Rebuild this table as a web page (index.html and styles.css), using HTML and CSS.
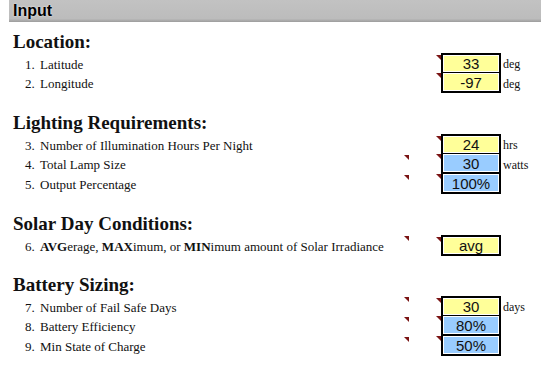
FILE: index.html
```html
<!DOCTYPE html>
<html>
<head>
<meta charset="utf-8">
<link rel="stylesheet" href="styles.css">
</head>
<body>
<div class="bar"><span class="bar-title">Input</span></div>

<section class="sec">
  <h2 class="head">Location:</h2>
  <div class="row">
    <span class="num">1.</span><span class="label">Latitude</span><span class="mk"></span>
    <span class="box first yellow"><i class="tri"></i>33</span><span class="unit">deg</span>
  </div>
  <div class="row">
    <span class="num">2.</span><span class="label">Longitude</span><span class="mk"></span>
    <span class="box last yellow"><i class="tri"></i>-97</span><span class="unit">deg</span>
  </div>
</section>

<section class="sec">
  <h2 class="head">Lighting Requirements:</h2>
  <div class="row">
    <span class="num">3.</span><span class="label">Number of Illumination Hours Per Night</span><span class="mk"></span>
    <span class="box first yellow"><i class="tri"></i>24</span><span class="unit">hrs</span>
  </div>
  <div class="row">
    <span class="num">4.</span><span class="label">Total Lamp Size</span><span class="mk"><i class="tri"></i></span>
    <span class="box blue"><i class="tri"></i>30</span><span class="unit">watts</span>
  </div>
  <div class="row">
    <span class="num">5.</span><span class="label">Output Percentage</span><span class="mk"><i class="tri"></i></span>
    <span class="box last blue"><i class="tri"></i>100%</span><span class="unit"></span>
  </div>
</section>

<section class="sec">
  <h2 class="head">Solar Day Conditions:</h2>
  <div class="row">
    <span class="num">6.</span><span class="label"><b>AVG</b>erage, <b>MAX</b>imum, or <b>MIN</b>imum amount of Solar Irradiance</span><span class="mk"><i class="tri"></i></span>
    <span class="box first last yellow"><i class="tri"></i>avg</span><span class="unit"></span>
  </div>
</section>

<section class="sec">
  <h2 class="head">Battery Sizing:</h2>
  <div class="row">
    <span class="num">7.</span><span class="label">Number of Fail Safe Days</span><span class="mk"><i class="tri"></i></span>
    <span class="box first yellow"><i class="tri"></i>30</span><span class="unit">days</span>
  </div>
  <div class="row">
    <span class="num">8.</span><span class="label">Battery Efficiency</span><span class="mk"><i class="tri"></i></span>
    <span class="box blue"><i class="tri"></i>80%</span><span class="unit"></span>
  </div>
  <div class="row">
    <span class="num">9.</span><span class="label">Min State of Charge</span><span class="mk"><i class="tri"></i></span>
    <span class="box last blue"><i class="tri"></i>50%</span><span class="unit"></span>
  </div>
</section>
</body>
</html>
```
FILE: styles.css
```css
html, body {
  margin: 0;
  padding: 0;
  background: #ffffff;
  width: 541px;
  height: 365px;
  overflow: hidden;
}
body {
  font-family: "Liberation Serif", "DejaVu Serif", serif;
  color: #111;
}
.bar {
  margin-left: 9px;
  height: 22px;
  background: linear-gradient(#c2c2c2, #bcbcbc 85%, #9c9c9c);
  display: flex;
  align-items: center;
  padding-left: 4px;
}
.bar-title {
  font-family: "Liberation Sans", Arial, sans-serif;
  font-weight: bold;
  font-size: 16px;
  color: #000;
  text-shadow: 0 0 2px #fff;
}
.sec {
  margin-top: 19px;
}
.sec:first-of-type {
  margin-top: 9px;
}
.head {
  margin: 0;
  padding-left: 13px;
  height: 22px;
  line-height: 22px;
  font-size: 19px;
  font-weight: bold;
}
.row {
  display: grid;
  grid-template-columns: 25px 15px 364px 37px 60px auto;
  height: 20px;
  align-items: stretch;
  font-size: 13px;
}
.num {
  grid-column: 2;
  align-self: center;
  padding-top: 2px;
}
.label {
  align-self: center;
  white-space: nowrap;
  padding-top: 2px;
}
.mk {
  position: relative;
}
.tri {
  position: absolute;
  top: 1px;
  left: -5px;
  width: 0;
  height: 0;
  border-top: 5px solid #7a1414;
  border-left: 5px solid transparent;
}
.mk .tri {
  left: 0;
}
.box {
  position: relative;
  box-sizing: border-box;
  border-left: 2px solid #000;
  border-right: 2px solid #000;
  border-bottom: 2px solid #000;
  font-family: "Liberation Sans", Arial, sans-serif;
  font-size: 15px;
  display: flex;
  align-items: center;
  justify-content: center;
  box-shadow: inset 0 0 0 1px #fff;
}
.box.first {
  border-top: 2px solid #000;
}
.box .tri {
  left: -7px;
  top: 0;
}
.yellow { background: #ffff99; }
.blue { background: #99ccff; }
.unit {
  align-self: center;
  padding-left: 2px;
  padding-top: 2px;
  font-size: 12px;
}
```
